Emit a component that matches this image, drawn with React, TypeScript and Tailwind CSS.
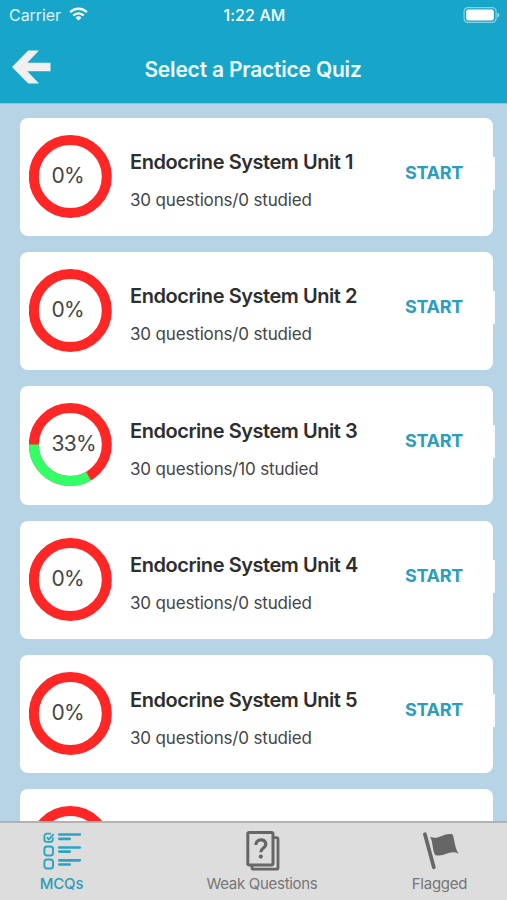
import type { ReactNode } from "react";

interface Quiz {
  unit: number;
  total: number;
  studied: number;
}

const QUIZZES: Quiz[] = [
  { unit: 1, total: 30, studied: 0 },
  { unit: 2, total: 30, studied: 0 },
  { unit: 3, total: 30, studied: 10 },
  { unit: 4, total: 30, studied: 0 },
  { unit: 5, total: 30, studied: 0 },
];

function StatusBar() {
  return (
    <div className="grid h-[30px] grid-cols-3 items-center pl-[9px] pr-[7px] text-[16px] leading-[30px] text-white">
      <div className="flex items-center gap-2">
        <span className="tracking-[-0.05px] text-white/85">Carrier</span>
        <svg className="mb-px" width="19" height="14.5" viewBox="0 0 20 15" fill="none" stroke="white" strokeWidth="2.5">
          <path d="M1.2 5.4a12.4 12.4 0 0 1 17.6 0" />
          <path d="M4.5 8.8a7.8 7.8 0 0 1 11 0" />
          <path d="M10 14.2 6.9 11.2a4.4 4.4 0 0 1 6.2 0z" fill="white" stroke="none" />
        </svg>
      </div>
      <span className="text-center font-medium tracking-[0.1px]">1:22 AM</span>
      <svg className="mb-px justify-self-end" width="37" height="16" viewBox="0 0 37 16">
        <rect x="1.1" y="0.6" width="32" height="14.8" rx="4" fill="none" stroke="white" strokeOpacity="0.5" strokeWidth="1.2" />
        <rect x="3.2" y="2.6" width="27.6" height="10.8" rx="1.8" fill="white" />
        <path d="M34.4 5.4c2.4.8 2.4 4.4 0 5.2z" fill="white" fillOpacity="0.55" />
      </svg>
    </div>
  );
}

function Header() {
  return (
    <header className="h-[103px] shrink-0 bg-[#18a5ca]">
      <StatusBar />
      <div className="grid h-[73px] grid-cols-[60px_1fr_60px] items-center">
        <button type="button" aria-label="Back" className="pl-3 pt-px">
          <svg width="39" height="34" viewBox="0 0 39 34" fill="#f0f0f0">
            <path d="M0 17 16.3.5H27L15.3 12.8H38.5V21.3H15.3L27 33.5H16.3z" />
          </svg>
        </button>
        <h1 className="pr-px pt-[7px] text-center text-[21px] font-semibold leading-[28px] tracking-[-0.2px] text-[#effcff]">
          Select a Practice Quiz
        </h1>
      </div>
    </header>
  );
}

function RingChart({ percent }: { percent: number }) {
  return (
    <svg
      className="col-start-1 row-start-1"
      width="84"
      height="84"
      viewBox="0.7 1 84 84"
      fill="none"
      strokeWidth="10"
    >
      <circle cx="42" cy="42.5" r="36.5" stroke="#ff2626" />
      {percent > 0 && (
        <circle
          cx="42"
          cy="42.5"
          r="36.5"
          stroke="#33ff66"
          pathLength={100}
          strokeDasharray={`${percent} 100`}
          transform="rotate(60 42 42.5)"
        />
      )}
    </svg>
  );
}

function ProgressRing({ percent }: { percent: number }) {
  return (
    <div className="grid h-[84px] w-[84px] shrink-0 items-center">
      <RingChart percent={percent} />
      <span className="col-start-1 row-start-1 mb-[2px] pl-[23px] text-[21px] leading-[26px] tracking-[-0.7px] text-[#454545]">
        {Math.floor(percent)}%
      </span>
    </div>
  );
}

function QuizCard({ unit, total, studied }: Quiz) {
  return (
    <li className="flex h-[118.4px] shrink-0 items-center">
      <div className="flex h-full w-[473.5px] items-center rounded-[8px] bg-white pl-[9px]">
        <ProgressRing percent={(studied / total) * 100} />
        <div className="ml-[17.5px] flex-1 pt-[7.6px]">
          <h2 className="text-[20px] font-semibold leading-[28px] tracking-[-0.45px] text-[#2e2e2e]">
            Endocrine System Unit {unit}
          </h2>
          <p className="mt-[11px] text-[17px] leading-[26px] tracking-[-0.16px] text-[#454545]">
            {total} questions/{studied} studied
          </p>
        </div>
        <button
          type="button"
          className="mb-[8px] mr-[30px] text-[18px] font-bold leading-[24px] tracking-[-0.3px] text-[#2a9ebb]"
        >
          START
        </button>
      </div>
      <span className="mb-[7px] h-[33px] w-[2px] bg-white/90" />
    </li>
  );
}

/** Top edge of the next card, peeking out above the tab bar. */
function PeekCard() {
  return (
    <li className="h-[118.4px] w-[473.5px] shrink-0 rounded-[8px] bg-white pl-[9px] pt-[17px]">
      <RingChart percent={0} />
    </li>
  );
}

function ChecklistIcon() {
  return (
    <svg width="39" height="38" viewBox="0 0 39 38" fill="none" stroke="#2ba3c2">
      <path
        d="M9.8 5.5V7.5a2.4 2.4 0 0 1-2.4 2.4H3.8A2.4 2.4 0 0 1 1.4 7.5V4.1A2.4 2.4 0 0 1 3.8 1.7h4M3.8 5.4l2.1 2 4.7-5.4"
        strokeWidth="1.8"
      />
      <rect x="1.4" y="14.5" width="8.6" height="9" rx="2.6" strokeWidth="1.9" />
      <rect x="1.4" y="27.5" width="8.6" height="9" rx="2.6" strokeWidth="1.9" />
      <path
        d="M16.3 2.5h20.5M16.3 6.8h10.4M16.3 15.5h20.5M16.3 19.6h10.4M16.3 28.3h20.5M16.3 32.5h10.4"
        strokeWidth="2.7"
        strokeLinecap="round"
      />
    </svg>
  );
}

function QuestionCardsIcon() {
  return (
    <svg width="34" height="40" viewBox="0 0 34 40" fill="none" stroke="#666" strokeLinejoin="round">
      <rect x="1.8" y="1.6" width="25.2" height="32.4" rx="1.5" strokeWidth="3" />
      <path d="M27 6.7h3.5a1.5 1.5 0 0 1 1.5 1.5v28.5a1.5 1.5 0 0 1-1.5 1.5H7.5A1.5 1.5 0 0 1 6 36.7V34" strokeWidth="2.8" />
      <path d="M9.8 14c0-6.6 10-6.8 10-.8 0 3.9-5 3.8-5 8" strokeWidth="3.2" />
      <circle cx="14.8" cy="25.6" r="2.1" fill="#666" stroke="none" />
    </svg>
  );
}

function FlagIcon() {
  return (
    <svg width="36" height="38" viewBox="0 0 36 38" fill="#666">
      <path d="M1.9 2.2 10.8 35.3" stroke="#666" strokeWidth="3.7" strokeLinecap="round" />
      <path d="M7.2 4.7C15.5 8.5 20.1.4 29.5 2.2c2 4 1.8 12.4 6 19.4-9.4-4.3-14.1 4.3-23.4 1.4C9.2 17.4 10.3 11.1 7.2 4.7z" />
    </svg>
  );
}

interface TabProps {
  label: string;
  icon: ReactNode;
  className: string;
}

function Tab({ label, icon, className }: TabProps) {
  return (
    <button type="button" className={`flex flex-col items-center text-[15px] leading-[20px] ${className}`}>
      <span className="flex h-[45px] items-center pb-px pl-[2px]">{icon}</span>
      <span className="whitespace-nowrap">{label}</span>
    </button>
  );
}

export default function App() {
  return (
    <div className="flex h-[900px] w-[507px] flex-col overflow-hidden bg-[#b6d4e5] font-[Inter,'Liberation_Sans',sans-serif]">
      <Header />
      <main className="min-h-0 flex-1 overflow-hidden border-t border-[#8ac7dc]">
        <ul className="flex flex-col gap-4 pl-[19.5px] pt-[13.5px]">
          {QUIZZES.map((quiz) => (
            <QuizCard key={quiz.unit} {...quiz} />
          ))}
          <PeekCard />
        </ul>
      </main>
      <nav className="flex h-[79px] shrink-0 border-t-2 border-[#b2b2b2] bg-[#dddddd] pt-[6px]">
        <Tab
          label="MCQs"
          icon={<ChecklistIcon />}
          className="ml-[39.5px] w-[44px] font-medium tracking-[-0.15px] text-[#2f9bb7]"
        />
        <Tab
          label="Weak Questions"
          icon={<QuestionCardsIcon />}
          className="ml-[122.5px] w-[112px] tracking-[-0.3px] text-[#757575]"
        />
        <Tab
          label="Flagged"
          icon={<FlagIcon />}
          className="ml-[93.5px] w-[56px] tracking-[-0.25px] text-[#757575]"
        />
      </nav>
    </div>
  );
}
